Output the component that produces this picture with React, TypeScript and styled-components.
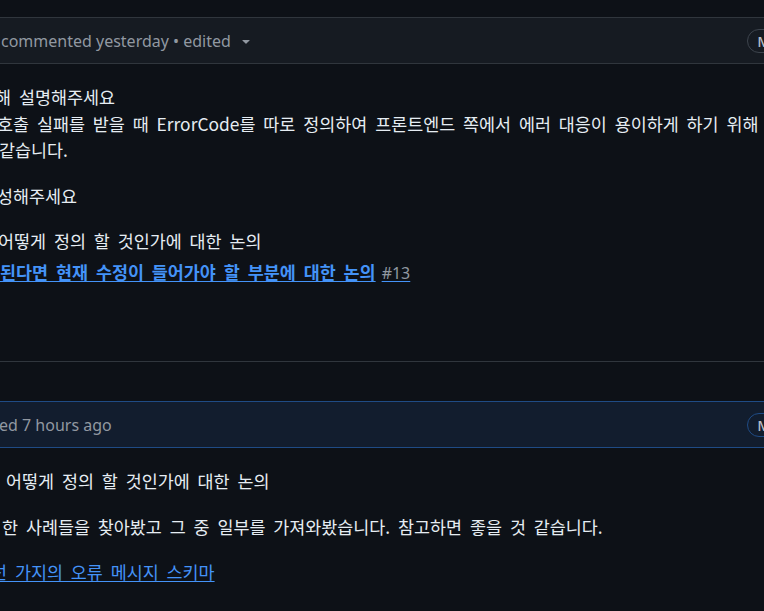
import React from 'react';
import styled, { createGlobalStyle } from 'styled-components';

// Styles
const GlobalStyle = createGlobalStyle`
  html, body {
    margin: 0;
    background: #0d1117;
    overflow: hidden;
  }
`;

const Timeline = styled.div`
  width: 862px;
  margin-left: -17px;
  padding-top: 17px;
  display: flex;
  flex-direction: column;
  gap: 39px;
`;

const Comment = styled.div<{ $self?: boolean }>`
  border: 1px solid ${(p) => (p.$self ? '#1f4b85' : '#30363d')};
  border-radius: 6px;
  background: #0d1117;
`;

const Header = styled.div<{ $self?: boolean }>`
  display: flex;
  align-items: center;
  height: 45px;
  padding: 0 16px;
  background: ${(p) => (p.$self ? '#121d2e' : '#161b22')};
  border-bottom: 1px solid ${(p) => (p.$self ? '#1f4b85' : '#30363d')};
  border-radius: 6px 6px 0 0;
  color: #9198a1;
  font-family: "Noto Sans", sans-serif;
  font-size: 16px;
  line-height: 24px;
  white-space: nowrap;
`;

const Meta = styled.span<{ $shift: number }>`
  display: inline-flex;
  align-items: center;
  margin-left: ${(p) => p.$shift}px;
`;

const Caret = styled.svg`
  margin-left: 7px;
  fill: #9198a1;
`;

const Badge = styled.span<{ $self?: boolean }>`
  margin-left: auto;
  height: 22px;
  padding: 0 9px;
  border: 1px solid ${(p) => (p.$self ? '#1f4b85' : '#3d444d')};
  border-radius: 2em;
  color: #b7bdc8;
  font-size: 15px;
  font-weight: 500;
  line-height: 22px;
`;

const Body = styled.div<{ $bottom: number }>`
  padding: 20px 16px ${(p) => p.$bottom}px;
  color: #e6edf3;
  font-family: "Noto Sans CJK KR", "Noto Sans", sans-serif;
  font-size: 17.4px;
  line-height: 26.5px;
  word-spacing: 4px;
`;

const Para = styled.div<{ $gap?: number }>`
  & + & {
    margin-top: ${(p) => p.$gap ?? 20}px;
  }
`;

const Line = styled.div<{ $shift: number; $top?: number }>`
  white-space: nowrap;
  margin-left: ${(p) => p.$shift}px;
  margin-top: ${(p) => p.$top ?? 0}px;
`;

const Link = styled.a<{ $bold?: boolean }>`
  color: #4493f8;
  font-weight: ${(p) => (p.$bold ? 700 : 400)};
  text-decoration: underline;
  text-underline-offset: 2px;
`;

const IssueNum = styled.span`
  margin-left: 6px;
  color: #9198a1;
  font-family: "Noto Sans", sans-serif;
  font-size: 16px;
  font-weight: 400;
`;

const CaretDown = () => (
  <Caret width="16" height="16" viewBox="0 0 16 16">
    <path d="m4.427 7.427 3.396 3.396a.25.25 0 0 0 .354 0l3.396-3.396A.25.25 0 0 0 11.396 7H4.604a.25.25 0 0 0-.177.427Z" />
  </Caret>
);

const App: React.FC = () => {
  return (
    <>
      <GlobalStyle />
      <Timeline>
        <Comment>
          <Header>
            <Meta $shift={1}>
              commented yesterday • edited
              <CaretDown />
            </Meta>
            <Badge>Member</Badge>
          </Header>
          <Body $bottom={74.5}>
            <Para>
              <Line $shift={-5}>해 설명해주세요</Line>
              <Line $shift={-3}>
                호출 실패를 받을 때 ErrorCode를 따로 정의하여 프론트엔드 쪽에서 에러 대응이 용이하게 하기 위해
              </Line>
              <Line $shift={-1}>같습니다.</Line>
            </Para>
            <Para>
              <Line $shift={-3}>성해주세요</Line>
            </Para>
            <Para>
              <Line $shift={-2}>어떻게 정의 할 것인가에 대한 논의</Line>
              <Line $shift={0} $top={4.5}>
                <Link $bold href="#">
                  된다면 현재 수정이 들어가야 할 부분에 대한 논의<IssueNum>#13</IssueNum>
                </Link>
              </Line>
            </Para>
          </Body>
        </Comment>

        <Comment $self>
          <Header $self>
            <Meta $shift={-1}>ed 7 hours ago</Meta>
            <Badge $self>Member</Badge>
          </Header>
          <Body $bottom={60}>
            <Para>
              <Line $shift={6}>어떻게 정의 할 것인가에 대한 논의</Line>
            </Para>
            <Para>
              <Line $shift={2}>
                한 사례들을 찾아봤고 그 중 일부를 가져와봤습니다. 참고하면 좋을 것 같습니다.
              </Line>
            </Para>
            <Para $gap={19}>
              <Line $shift={-9}>
                <Link href="#">선 가지의 오류 메시지 스키마</Link>
              </Line>
            </Para>
          </Body>
        </Comment>
      </Timeline>
    </>
  );
};

export default App;
